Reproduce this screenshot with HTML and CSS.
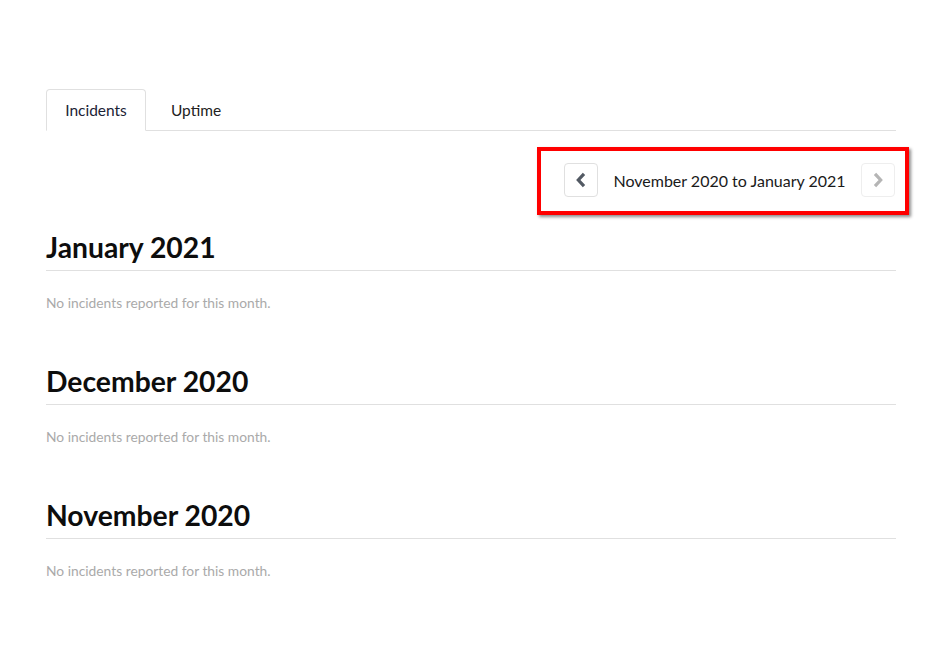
FILE: index.html
```html
<!DOCTYPE html>
<html>
<head>
<meta charset="utf-8">
<link rel="stylesheet" href="styles.css">
</head>
<body>
<div class="page">
  <nav class="tabs">
    <a class="tab active">Incidents</a>
    <a class="tab">Uptime</a>
  </nav>
  <div class="range-row">
    <div class="range-box">
      <button class="pager">
        <svg width="12" height="16" viewBox="0 0 12 16"><path d="M9 1.8 L3.3 8 L9 14.2" fill="none" stroke="#525963" stroke-width="3.2" stroke-linejoin="miter"/></svg>
      </button>
      <span class="range-label">November 2020 to January 2021</span>
      <button class="pager disabled">
        <svg width="12" height="16" viewBox="0 0 12 16"><path d="M3 1.8 L8.7 8 L3 14.2" fill="none" stroke="#b5b5b5" stroke-width="3.2" stroke-linejoin="miter"/></svg>
      </button>
    </div>
  </div>
  <section class="month">
    <h2>January 2021</h2>
    <p class="empty">No incidents reported for this month.</p>
  </section>
  <section class="month">
    <h2>December 2020</h2>
    <p class="empty">No incidents reported for this month.</p>
  </section>
  <section class="month">
    <h2>November 2020</h2>
    <p class="empty">No incidents reported for this month.</p>
  </section>
</div>
</body>
</html>
```
FILE: styles.css
```css
html, body {
  margin: 0;
  padding: 0;
  background: #fff;
}
body {
  font-family: Lato, "Liberation Sans", sans-serif;
  color: #1a1a1a;
}
.page {
  padding: 89px 50px 0 46px;
}
.tabs {
  display: flex;
  border-bottom: 1px solid #e0e0e0;
  height: 41px;
}
.tab {
  display: flex;
  align-items: center;
  justify-content: center;
  width: 100px;
  height: 41px;
  font-size: 15.5px;
  color: #222;
  box-sizing: border-box;
  border: 1px solid transparent;
  border-radius: 4px 4px 0 0;
}
.tab.active {
  border-color: #e0e0e0;
  border-bottom-color: #fff;
  background: #fff;
  height: 42px;
  color: #1b2235;
}
.range-row {
  display: flex;
  justify-content: flex-end;
  margin-right: -13px;
  margin-top: 16px;
}
.range-box {
  display: flex;
  align-items: center;
  border: 4px solid #f00;
  box-shadow: 2px 2px 3px rgba(0, 0, 0, 0.45);
  padding: 12px 10px 14px 23px;
  width: 372px;
  box-sizing: border-box;
}
.pager {
  width: 34px;
  height: 34px;
  border: 1px solid #e0e0e0;
  border-radius: 4px;
  background: #fff;
  display: flex;
  align-items: center;
  justify-content: center;
  padding: 0;
}
.pager.disabled {
  border-color: #eeeeee;
}
.range-label {
  flex: 1;
  text-align: center;
  font-size: 16px;
  color: #1a1a1a;
}
.month h2 {
  margin: 16px 0 0;
  font-size: 28.3px;
  font-weight: 700;
  line-height: 32px;
  padding-bottom: 7px;
  border-bottom: 1px solid #e0e0e0;
  color: #0d0d0d;
}
.empty {
  margin: 23px 0 0;
  font-size: 13.8px;
  color: #aaaaaa;
  line-height: 18px;
}
.month + .month h2 {
  margin-top: 53px;
}
```
